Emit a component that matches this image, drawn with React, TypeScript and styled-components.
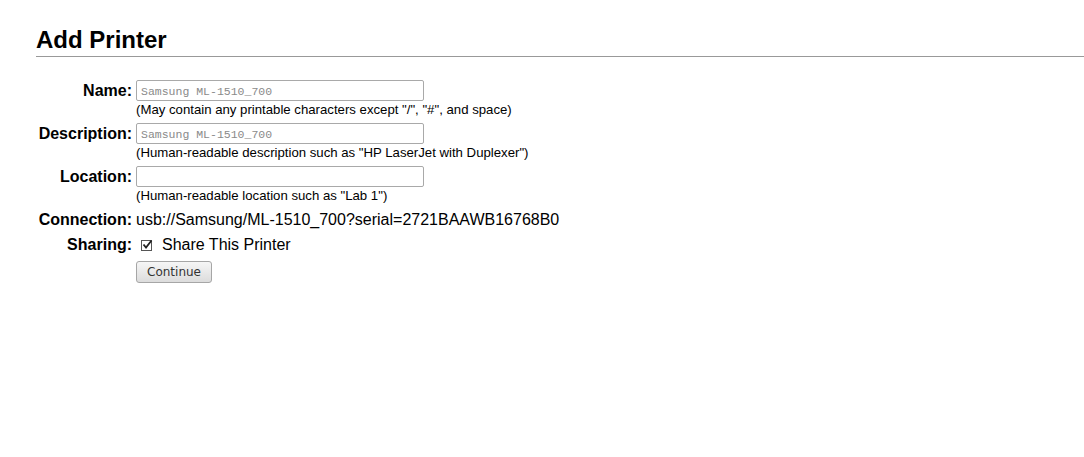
import styled, { createGlobalStyle } from "styled-components";

const GlobalStyle = createGlobalStyle`
  html, body {
    margin: 0;
    padding: 0;
    background: #fff;
  }
  body {
    font-family: "Liberation Sans", Arial, sans-serif;
    color: #000;
  }
`;

const Page = styled.div`
  padding: 26px 0 0 36px;
  width: 1048px;
`;

const Title = styled.h2`
  margin: 0;
  font-size: 24px;
  line-height: 28px;
  font-weight: bold;
  padding-bottom: 2px;
  border-bottom: 1px solid #999;
`;

const Form = styled.div`
  margin-top: 23px;
  display: grid;
  grid-template-columns: 96px auto;
  column-gap: 4px;
  row-gap: 4px;
  justify-content: start;
`;

const Label = styled.div`
  font-size: 16px;
  line-height: 21px;
  font-weight: bold;
  text-align: right;
  white-space: nowrap;
  display: flex;
  justify-content: flex-end;
  margin-left: -4px;
`;

const Cell = styled.div`
  display: flex;
  flex-direction: column;
  align-items: flex-start;
`;

const Input = styled.input`
  box-sizing: border-box;
  width: 288px;
  height: 21px;
  margin: 0;
  padding: 1px 4px 0;
  border: 1px solid #a9a9a9;
  border-radius: 2px;
  background: #fff;
  font-family: "Liberation Mono", "Courier New", monospace;
  font-size: 11.5px;
  color: #000;
  outline: none;
  &::placeholder {
    color: #8a8a8a;
  }
`;

const Help = styled.div`
  font-size: 13.2px;
  line-height: 18px;
`;

const Value = styled.div`
  font-size: 16px;
  line-height: 21px;
  white-space: nowrap;
`;

const CheckRow = styled.label`
  display: flex;
  align-items: center;
  height: 21px;
  font-size: 16px;
`;

const Box = styled.span`
  box-sizing: border-box;
  width: 11px;
  height: 11px;
  margin: 1px 10px 0 5px;
  border: 1px solid #555;
  background: #fff;
  position: relative;
  & > svg {
    position: absolute;
    left: 0px;
    top: -2px;
  }
`;

const Button = styled.button`
  box-sizing: border-box;
  width: 76px;
  height: 22px;
  margin-top: 2px;
  padding: 0;
  border: 1px solid #a6a6a6;
  border-radius: 3px;
  background: linear-gradient(#f6f6f6, #dcdcdc);
  font-family: "DejaVu Sans", "Liberation Sans", sans-serif;
  font-size: 12px;
  color: #333;
`;

const fields = [
  {
    label: "Name:",
    placeholder: "Samsung ML-1510_700",
    help: '(May contain any printable characters except "/", "#", and space)',
  },
  {
    label: "Description:",
    placeholder: "Samsung ML-1510_700",
    help: '(Human-readable description such as "HP LaserJet with Duplexer")',
  },
  {
    label: "Location:",
    placeholder: "",
    help: '(Human-readable location such as "Lab 1")',
  },
];

const App = () => {
  return (
    <>
      <GlobalStyle />
      <Page>
        <Title>Add Printer</Title>
        <Form>
          {fields.map((f) => (
            <>
              <Label key={f.label + "l"}>{f.label}</Label>
              <Cell key={f.label + "c"}>
                <Input placeholder={f.placeholder} />
                <Help>{f.help}</Help>
              </Cell>
            </>
          ))}
          <Label>Connection:</Label>
          <Value>usb://Samsung/ML-1510_700?serial=2721BAAWB16768B0</Value>
          <Label>Sharing:</Label>
          <CheckRow>
            <Box>
              <svg width="11" height="11" viewBox="0 0 11 11">
                <path d="M1.5 5.5 L4 8.5 L9.5 1.5" fill="none" stroke="#222" strokeWidth="1.8" />
              </svg>
            </Box>
            Share This Printer
          </CheckRow>
          <div />
          <Cell>
            <Button>Continue</Button>
          </Cell>
        </Form>
      </Page>
    </>
  );
};

export default App;
